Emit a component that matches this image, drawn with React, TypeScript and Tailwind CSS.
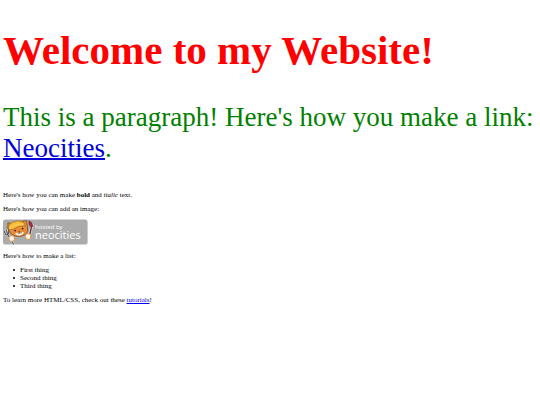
function HostedBadge() {
  return (
    <svg viewBox="0 0 85 26" role="img" aria-label="Hosted by Neocities" className="mt-[6px] block h-[26px] w-[85px]">
      <rect x="0" y="0.5" width="84.6" height="25" rx="2.6" fill="#ababab" />
      <g strokeLinecap="round" strokeLinejoin="round">
        <path d="M1 11.8 L2.7 15.5 M3.3 10.9 L4.4 14.5 M5.6 10.8 L5.6 14 M2.7 15.5 Q4.5 16.5 5.6 14 M4.7 15.5 L10.4 25" fill="none" stroke="#e5e5e5" strokeWidth="2" />
        <path d="M1 11.8 L2.7 15.5 M3.3 10.9 L4.4 14.5 M5.6 10.8 L5.6 14 M2.7 15.5 Q4.5 16.5 5.6 14 M4.7 15.5 L10.4 25" fill="none" stroke="#505158" strokeWidth="1.1" />
        <path d="M5 9 L4.8 3.8 L9 4.7 Q13 1.5 18 2.5 L23.4 1.5 L24.3 7 Q26 13.5 21.2 16.2 Q13.7 19.2 8.2 15 Q5.5 12.7 5 9 Z" fill="#ed8c32" stroke="#7b4b2b" strokeWidth="0.8" />
        <path d="M5.3 10 Q4.8 5.6 9.2 3.4 Q14.5 0.5 19.6 2.8 Q21.9 4 22.3 7 Q15.8 6.2 10.5 10.2 Q7.6 12 5.3 10 Z" fill="#f5bc38" stroke="#9b6a29" strokeWidth="0.7" />
        <path d="M7.2 8.8 Q12.2 4.5 20 5.2" fill="none" stroke="#ffd766" strokeWidth="0.8" />
        <path d="M12 14.8 Q13.8 13.2 16 14.3 Q18.2 12.7 20.8 13.2 Q20.4 15.7 17.1 16.4 Q13.6 17 12 14.8" fill="#fff5e8" />
        <circle cx="12.2" cy="11.6" r="0.9" fill="#34241d" />
        <circle cx="19.6" cy="9.7" r="0.9" fill="#34241d" />
        <path d="M15.6 12.4 L17 12.1 L16.6 13 L16.8 14 Q15.9 15.3 14.8 14.6 M16.8 14 Q18.2 14.8 19 13.5" fill="none" stroke="#624435" strokeWidth="0.6" />
        <path d="M26.5 16 L29 6" stroke="#e5e5e5" strokeWidth="2.8" />
        <path d="M26.9 15 L28.7 7" stroke="#70343a" strokeWidth="1.4" />
        <path d="M26 2 Q29.4 3.1 29.8 7.3 L27.4 7.6 Q25.3 5.2 26 2" fill="#b72a35" stroke="#64252a" strokeWidth="0.6" />
        <circle cx="8.8" cy="19.5" r="2.9" fill="#fff8e9" stroke="#d8873b" strokeWidth="0.8" />
        <circle cx="25.2" cy="17.5" r="2.9" fill="#fff8e9" stroke="#d8873b" strokeWidth="0.8" />
      </g>
      <g fill="#fff" fontFamily="Open Sans, sans-serif">
        <text x="32" y="10" fontSize="6">hosted by</text>
        <text x="32" y="20" fontSize="11">neocities</text>
      </g>
    </svg>
  );
}

const items = ['First thing', 'Second thing', 'Third thing'];

export default function App() {
  return (
    <main className="bg-white px-[3px] pt-[26px] font-['Liberation_Serif',serif] text-[7px] leading-[8px] text-black">
      <h1 className="text-[41px] leading-[48px] font-bold text-[#ff0000]">Welcome to my Website!</h1>
      <p className="mt-[28px] text-[27px] leading-[31px] text-[#008000]">
        This is a paragraph! Here's how you make a link:{' '}
        <a href="#neocities" className="text-[#0000d8] underline decoration-2">Neocities</a>.
      </p>
      <p className="mt-[27px]">
        Here's how you can make <strong className="font-bold">bold</strong> and <em>italic</em> text.
      </p>
      <p className="mt-[6px]">Here's how you can add an image:</p>
      <HostedBadge />
      <p className="mt-[7px]">Here's how to make a list:</p>
      <ul className="mt-[6px] pl-[10px]">
        {items.map((item) => (
          <li key={item} className="flex items-center gap-[5px] before:size-[2px] before:rounded-full before:bg-black">
            {item}
          </li>
        ))}
      </ul>
      <p className="mt-[6px]">
        To learn more HTML/CSS, check out these <a href="#tutorials" className="text-[#0000ee] underline">tutorials</a>!
      </p>
    </main>
  );
}
